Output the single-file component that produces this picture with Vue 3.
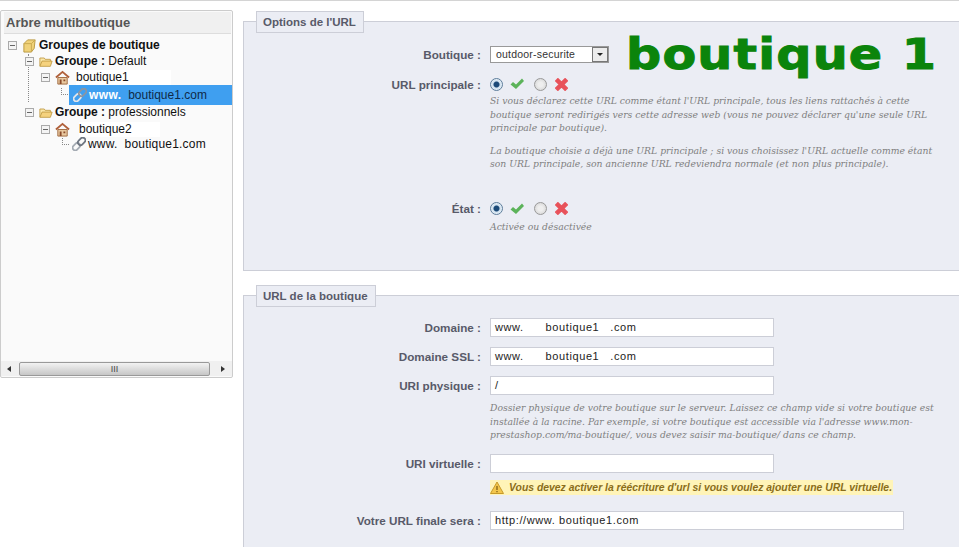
<template>
  <div class="page">
    <aside class="tree-panel">
      <h3 class="tree-title">Arbre multiboutique</h3>
      <div class="tree-body">
        <span class="guide-main"></span>
        <div class="node root">
          <span class="toggle"></span>
          <svg class="ico" viewBox="0 0 16 16"><path d="M2 6 6 2h8l-1 9-3 4H2z" fill="#f0d27a" stroke="#b9973f"/><path d="M2 6h8v9M10 6l4-4" fill="none" stroke="#c9a94f"/></svg>
          <b>Groupes de boutique</b>
        </div>
        <div class="node group">
          <span class="toggle"></span>
          <svg class="ico" viewBox="0 0 16 16"><path d="M1 13V4h5l1 1.500h6V8" fill="#fbe7a8" stroke="#c09a45"/><path d="M1 13.500 3.500 7.500H15L13 13.500z" fill="#f5d27e" stroke="#c09a45"/></svg>
          <span><b>Groupe :</b> Default</span>
        </div>
        <div class="node shop">
          <span class="toggle"></span>
          <svg class="ico" viewBox="0 0 16 16"><path d="M1 8 8 2l7 6" fill="none" stroke="#b0603a" stroke-width="2"/><path d="M3 8h10v7H3z" fill="#e9c9a0" stroke="#a06a40"/><path d="M5 10h2v5H5zM9 10h2v2H9z" fill="#8a4a2a"/></svg>
          <span class="erased">boutique1</span>
        </div>
        <div class="node url selected">
          <span class="elbow"></span>
          <svg class="ico link" viewBox="0 0 16 16"><g transform="rotate(-45 8 8)" fill="none" stroke-width="2"><rect x="-1" y="5" width="9.500" height="6" rx="3" stroke="#e3e6ea"/><rect x="7.500" y="5" width="9.500" height="6" rx="3" stroke="#8b95a1"/></g></svg>
          <span><span class="w">www.</span>&nbsp;&nbsp;boutique1.com</span>
        </div>
        <div class="node group second">
          <span class="toggle"></span>
          <svg class="ico" viewBox="0 0 16 16"><path d="M1 13V4h5l1 1.500h6V8" fill="#fbe7a8" stroke="#c09a45"/><path d="M1 13.500 3.500 7.500H15L13 13.500z" fill="#f5d27e" stroke="#c09a45"/></svg>
          <span><b>Groupe :</b> professionnels</span>
        </div>
        <div class="node shop two">
          <span class="toggle"></span>
          <svg class="ico" viewBox="0 0 16 16"><path d="M1 8 8 2l7 6" fill="none" stroke="#b0603a" stroke-width="2"/><path d="M3 8h10v7H3z" fill="#e9c9a0" stroke="#a06a40"/><path d="M5 10h2v5H5zM9 10h2v2H9z" fill="#8a4a2a"/></svg>
          <span class="erased">boutique2</span>
        </div>
        <div class="node url plain">
          <span class="elbow"></span>
          <svg class="ico link" viewBox="0 0 16 16"><g transform="rotate(-45 8 8)" fill="none" stroke-width="2"><rect x="-1" y="5" width="9.500" height="6" rx="3" stroke="#a4abb3"/><rect x="7.500" y="5" width="9.500" height="6" rx="3" stroke="#6d7580"/></g></svg>
          <span>www.&nbsp;&nbsp;boutique1.com</span>
        </div>
      </div>
      <div class="scrollbar">
        <span class="arrow left"></span>
        <div class="thumb">III</div>
        <span class="arrow right"></span>
      </div>
    </aside>

    <main class="content">
      <section class="fieldset first">
        <div class="legend">Options de l'URL</div>
        <div class="row shop-row">
          <label>Boutique :</label>
          <div class="fake-select">
            <span>outdoor-securite</span>
            <span class="select-btn"></span>
          </div>
          <div class="logo">boutique 1</div>
        </div>
        <div class="row radio-row">
          <label>URL principale :</label>
          <div class="radios">
            <span class="radio on"></span>
            <svg class="mark" viewBox="0 0 14 12"><path d="M.5 6.500 3 4l3 2.500L12 .5l2 2.500-8 8z" fill="#5cb35a"/></svg>
            <span class="radio"></span>
            <svg class="mark cross" viewBox="1.500 1.500 9 9"><path d="M2 3.500 3.500 2 6 4.500 8.500 2 10 3.500 7.500 6 10 8.500 8.500 10 6 7.500 3.500 10 2 8.500 4.500 6z" fill="#e8525a" stroke="#e8525a"/></svg>
          </div>
        </div>
        <p class="hint">Si vous déclarez cette URL comme étant l'URL principale, tous les liens rattachés à cette boutique seront redirigés vers cette adresse web (vous ne pouvez déclarer qu'une seule URL principale par boutique).</p>
        <p class="hint gap">La boutique choisie a déjà une URL principale ; si vous choisissez l'URL actuelle comme étant son URL principale, son ancienne URL redeviendra normale (et non plus principale).</p>
        <div class="row radio-row state">
          <label>État :</label>
          <div class="radios">
            <span class="radio on"></span>
            <svg class="mark" viewBox="0 0 14 12"><path d="M.5 6.500 3 4l3 2.500L12 .5l2 2.500-8 8z" fill="#5cb35a"/></svg>
            <span class="radio"></span>
            <svg class="mark cross" viewBox="1.500 1.500 9 9"><path d="M2 3.500 3.500 2 6 4.500 8.500 2 10 3.500 7.500 6 10 8.500 8.500 10 6 7.500 3.500 10 2 8.500 4.500 6z" fill="#e8525a" stroke="#e8525a"/></svg>
          </div>
        </div>
        <p class="hint state-hint">Activée ou désactivée</p>
      </section>

      <section class="fieldset second-set">
        <div class="legend">URL de la boutique</div>
        <div class="row input-row">
          <label>Domaine :</label>
          <div class="field">www.&nbsp;&nbsp;&nbsp;&nbsp;&nbsp;&nbsp;boutique1&nbsp;&nbsp;&nbsp;.com</div>
        </div>
        <div class="row input-row">
          <label>Domaine SSL :</label>
          <div class="field">www.&nbsp;&nbsp;&nbsp;&nbsp;&nbsp;&nbsp;boutique1&nbsp;&nbsp;&nbsp;.com</div>
        </div>
        <div class="row input-row">
          <label>URI physique :</label>
          <div class="field">/</div>
        </div>
        <p class="hint uri-hint">Dossier physique de votre boutique sur le serveur. Laissez ce champ vide si votre boutique est installée à la racine. Par exemple, si votre boutique est accessible via l'adresse www.mon-prestashop.com/ma-boutique/, vous devez saisir ma-boutique/ dans ce champ.</p>
        <div class="row input-row virtual">
          <label>URI virtuelle :</label>
          <div class="field"></div>
        </div>
        <div class="warning">
          <svg class="warn-ico" viewBox="0 0 14 13"><path d="M7 1 13.500 12.500H.5z" fill="#f3c64c" stroke="#c79a2a"/><path d="M6.400 5h1.200v4H6.400zM6.400 10h1.200v1.300H6.400z" fill="#7a5a10"/></svg>
          <span>Vous devez activer la réécriture d'url si vous voulez ajouter une URL virtuelle.</span>
        </div>
        <div class="row input-row final">
          <label>Votre URL finale sera :</label>
          <div class="field wide">http://www. boutique1.com</div>
        </div>
      </section>
    </main>
  </div>
</template>

<script setup>
</script>

<style>
html, body {
  margin: 0;
  background: #fff;
  overflow: hidden;
}
</style>

<style scoped>
.page {
  width: 959px;
  height: 547px;
  box-sizing: border-box;
  display: flex;
  align-items: flex-start;
  padding-top: 10px;
  overflow: hidden;
  border-top: 1px solid #d4d4d4;
  font-family: "Liberation Sans", Arial, sans-serif;
  font-size: 12px;
  color: #222;
}

/* left tree */
.tree-panel {
  width: 233px;
  height: 368px;
  margin-top: -1px;
  box-sizing: border-box;
  border: 1px solid #ccc;
  border-radius: 2px;
  background: #fafafa;
  display: flex;
  flex-direction: column;
  flex-shrink: 0;
}

.tree-title {
  margin: 1px 1px 0 3px;
  height: 21px;
  line-height: 21px;
  padding-left: 2px;
  font-size: 13px;
  font-weight: bold;
  color: #555;
  background: #f0f0f0;
  border-bottom: 1px solid #ddd;
}

.tree-body {
  position: relative;
  flex: 1;
  padding-top: 3px;
}

.guide-main {
  position: absolute;
  left: 27px;
  top: 20px;
  height: 48px;
  border-left: 1px dotted #888;
}

.node {
  display: flex;
  align-items: center;
  height: 16px;
  font-size: 12px;
  color: #111;
  white-space: nowrap;
}

.node b {
  color: #111;
}

.root { padding-left: 7px; }
.group { padding-left: 24px; }
.shop { padding-left: 40px; }
.second { margin-top: -1px; }
.two { margin-top: 1px; }

.toggle {
  position: relative;
  width: 9px;
  height: 9px;
  box-sizing: border-box;
  border: 1px solid #aaa;
  background: #f4f4f4;
  flex-shrink: 0;
  margin-right: 5px;
}

.toggle::after {
  content: "";
  position: absolute;
  left: 1px;
  top: 3px;
  width: 5px;
  height: 1px;
  background: #666;
}

.ico {
  width: 15px;
  height: 15px;
  flex-shrink: 0;
  margin-right: 2px;
}

.group .ico { margin-right: 2px; width: 14px; }
.shop .ico { margin-right: 6px; }

.erased {
  background: #fff;
  width: 95px;
  line-height: 15px;
}

.two .erased {
  margin-left: 3px;
  width: 81px;
}

.url {
  position: relative;
}

.elbow {
  position: absolute;
  width: 6px;
  height: 6px;
  border-left: 1px dotted #888;
  border-bottom: 1px dotted #888;
}

.selected {
  height: 20px;
  margin-left: 68px;
  padding-left: 4px;
  background: #3f9ff0;
  color: #102a48;
}

.selected .elbow {
  left: -8px;
  top: 3px;
}

.selected .w {
  color: #fff;
  letter-spacing: 0.400px;
  font-weight: bold;
}

.selected .ico {
  margin-right: 2px;
}

.plain {
  height: 15px;
  margin-left: 71px;
  margin-top: -1px;
  letter-spacing: 0.2px;
}

.plain .elbow {
  left: -10px;
  top: 2px;
}

.link {
  width: 14px;
  height: 14px;
}

.scrollbar {
  height: 15px;
  margin-bottom: 1px;
  display: flex;
  align-items: center;
  background: #f0f0f0;
}

.arrow {
  width: 0;
  height: 0;
  border-top: 3px solid transparent;
  border-bottom: 3px solid transparent;
}

.arrow.left {
  margin: 0 8px 0 6px;
  border-right: 4px solid #333;
}

.arrow.right {
  margin: 0 7px 0 11px;
  border-left: 4px solid #333;
}

.thumb {
  flex: 1;
  height: 14px;
  box-sizing: border-box;
  border: 1px solid #999;
  border-radius: 2px;
  background: linear-gradient(#f2f2f2, #c6c6c6);
  font-size: 9px;
  line-height: 12px;
  text-align: center;
  color: #444;
}

/* right column */
.content {
  margin-left: 10px;
  width: 740px;
  flex-shrink: 0;
}

.fieldset {
  position: relative;
  box-sizing: border-box;
  width: 740px;
  margin-top: 10px;
  background: #ebedf4;
  border: 1px solid #ccced7;
  border-right: none;
}

.first {
  height: 250px;
  padding-top: 21px;
}

.second-set {
  margin-top: 24px;
  height: 300px;
  padding-top: 22px;
}

.legend {
  position: absolute;
  left: 12px;
  top: -11px;
  height: 22px;
  line-height: 20px;
  padding: 0 7px 0 6px;
  box-sizing: border-box;
  background: #ebedf4;
  border: 1px solid #ccced7;
  font-size: 11.500px;
  font-weight: bold;
  color: #585a69;
}

.row {
  display: flex;
  align-items: center;
}

.row label {
  width: 237px;
  flex-shrink: 0;
  margin-right: 9px;
  text-align: right;
  font-size: 11.700px;
  font-weight: bold;
  color: #585a69;
  white-space: nowrap;
}

.shop-row {
  height: 22px;
}

.fake-select {
  width: 119px;
  height: 17px;
  box-sizing: border-box;
  border: 1px solid #999;
  background: #fff;
  display: flex;
  justify-content: space-between;
  align-items: center;
  padding-left: 5px;
  font-size: 10.500px;
  color: #333;
  letter-spacing: 0.2px;
}

.select-btn {
  position: relative;
  width: 16px;
  height: 15px;
  box-sizing: border-box;
  border: 1px solid #777;
  background: #ececec;
}

.select-btn::after {
  content: "";
  position: absolute;
  left: 4px;
  top: 5px;
  border-left: 3px solid transparent;
  border-right: 3px solid transparent;
  border-top: 3px solid #222;
}

.logo {
  margin-left: 17px;
  font-family: "DejaVu Sans", sans-serif;
  font-size: 43px;
  line-height: 22px;
  font-weight: bold;
  color: #0b840b;
  letter-spacing: 1px;
  white-space: nowrap;
  -webkit-text-stroke: 1px #0b840b;
  transform: scaleX(1.145);
  transform-origin: left center;
}

.radio-row {
  height: 18px;
  margin-top: 10px;
}

.radios {
  display: flex;
  align-items: center;
}

.radio {
  width: 13px;
  height: 13px;
  box-sizing: border-box;
  border: 1px solid #999;
  border-radius: 50%;
  background: radial-gradient(circle, #eee 30%, #cfcfcf 100%);
  margin-right: 7px;
}

.radio.on {
  background: radial-gradient(circle, #1c4a78 0 2.500px, #cfe0ee 3.500px, #fff 100%);
  border-color: #5d7d9b;
}

.mark {
  width: 14px;
  height: 12px;
  margin-right: 10px;
}

.mark + .radio {
  margin-right: 8px;
}

.mark.cross {
  width: 13px;
  height: 13px;
}

.hint {
  margin: 0 0 0 246px;
  width: 455px;
  font-family: "DejaVu Serif", serif;
  font-style: italic;
  font-size: 9.250px;
  line-height: 13.500px;
  color: #7f7f7f;
}

.first > .hint {
  margin-top: 1px;
}

.first > .hint.gap {
  margin-top: 9px;
}

.state {
  margin-top: 29px;
}

.first > .state-hint {
  margin-top: 2px;
}

.input-row {
  height: 19px;
  margin-bottom: 10px;
}

.field {
  width: 284px;
  height: 19px;
  box-sizing: border-box;
  border: 1px solid #ccced7;
  background: #fff;
  padding-left: 4px;
  font-size: 11px;
  line-height: 17px;
  letter-spacing: 0.600px;
  color: #222;
  white-space: nowrap;
}

.field.wide {
  width: 414px;
}

.uri-hint {
  margin-top: -4px;
}

.virtual {
  margin-top: 12px;
  margin-bottom: 0;
}

.warning {
  margin: 7px 0 0 246px;
  width: 403px;
  height: 15px;
  display: flex;
  align-items: center;
  background: #fff4b8;
  font-size: 10.400px;
  font-weight: bold;
  font-style: italic;
  color: #8a6d1a;
  white-space: nowrap;
}

.warn-ico {
  width: 14px;
  height: 13px;
  margin-right: 5px;
}

.final {
  margin-top: 16px;
}
</style>
